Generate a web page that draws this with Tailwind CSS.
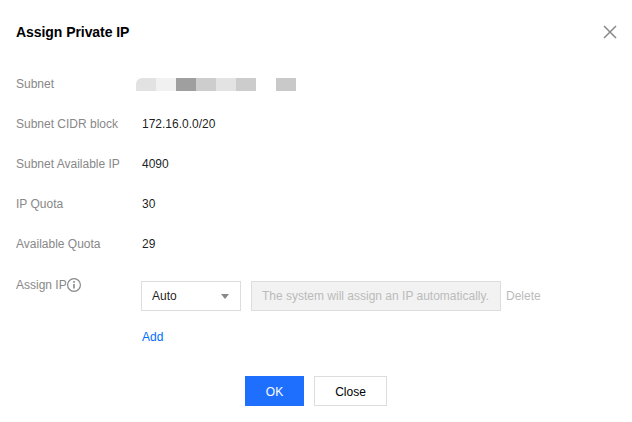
<!DOCTYPE html>
<html lang="en">
<head>
    <meta charset="UTF-8">
    <script src="https://cdn.jsdelivr.net/npm/@tailwindcss/browser@4"></script>
    <title>Assign Private IP</title>
</head>
<body class="bg-white">
    <div class="w-[632px] h-[422px] overflow-hidden relative text-[12px] leading-[20px] text-[#000000e6] font-['Liberation_Sans',sans-serif]">
        <div class="h-[64px] pl-4 pr-[14px] flex items-center justify-between">
            <h2 class="text-[14px] font-bold text-black tracking-[-0.06px]">Assign Private IP</h2>
            <button class="w-4 h-4 text-[#888888]">
                <svg viewBox="0 0 16 16" class="w-4 h-4" fill="none" stroke="currentColor" stroke-width="1.5"><path d="M2 2l12 12M14 2L2 14"/></svg>
            </button>
        </div>

        <div class="pl-4 flex flex-col">
            <div class="h-10 flex items-center">
                <span class="w-[120px] text-[#888888]">Subnet</span>
                <div class="flex h-[13px] mt-px">
                    <div class="w-5 bg-[#e2e2e2] rounded-tl-[6px]"></div>
                    <div class="w-5 bg-[#f1f1f1]"></div>
                    <div class="w-5 bg-[#9f9f9f]"></div>
                    <div class="w-5 bg-[#cdcdcd]"></div>
                    <div class="w-5 bg-[#e3e3e3]"></div>
                    <div class="w-5 bg-[#cccccc]"></div>
                    <div class="w-5"></div>
                    <div class="w-5 bg-[#c9c9c9]"></div>
                </div>
            </div>
            <div class="h-10 flex items-center">
                <span class="w-[126px] text-[#888888]">Subnet CIDR block</span>
                <span>172.16.0.0/20</span>
            </div>
            <div class="h-10 flex items-center">
                <span class="w-[126px] text-[#888888]">Subnet Available IP</span>
                <span>4090</span>
            </div>
            <div class="h-10 flex items-center">
                <span class="w-[126px] text-[#888888]">IP Quota</span>
                <span>30</span>
            </div>
            <div class="h-10 flex items-center">
                <span class="w-[126px] text-[#888888]">Available Quota</span>
                <span>29</span>
            </div>

            <div class="flex mt-[11px]">
                <div class="w-[125px] flex items-center h-5 text-[#888888]">
                    <span>Assign IP</span>
                    <svg viewBox="0 0 14 14" class="w-[14px] h-[14px]" fill="none" stroke="currentColor"><circle cx="7" cy="7" r="6.4" stroke-width="1.2"/><path d="M7 6v4.6" stroke-width="1.6"/><path d="M7 3v1.8" stroke-width="1.6"/></svg>
                </div>
                <div class="flex flex-col mt-[6px]">
                    <div class="flex items-center">
                        <div class="w-[100px] h-[30px] border border-[#dddddd] pl-[10px] pr-[11px] flex items-center justify-between">
                            <span>Auto</span>
                            <span class="w-0 h-0 border-x-[4.5px] border-x-transparent border-t-[5px] border-t-[#888888]"></span>
                        </div>
                        <div class="ml-[10px] w-[250px] h-[30px] border border-[#dddddd] bg-[#f2f2f2] flex items-center pl-[10px] text-[#bbbbbb]">The system will assign an IP automatically.</div>
                        <span class="ml-[5px] text-[#bbbbbb]">Delete</span>
                    </div>
                    <a class="mt-4 ml-px text-[#006eff]">Add</a>
                </div>
            </div>
        </div>

        <div class="absolute left-[245px] top-[376px] flex gap-[10px]">
            <button class="w-[59px] h-[30px] pt-px bg-[#1f6fff] text-white">OK</button>
            <button class="w-[73px] h-[30px] pt-px border border-[#dddddd] bg-white text-black">Close</button>
        </div>
    </div>
</body>
</html>
